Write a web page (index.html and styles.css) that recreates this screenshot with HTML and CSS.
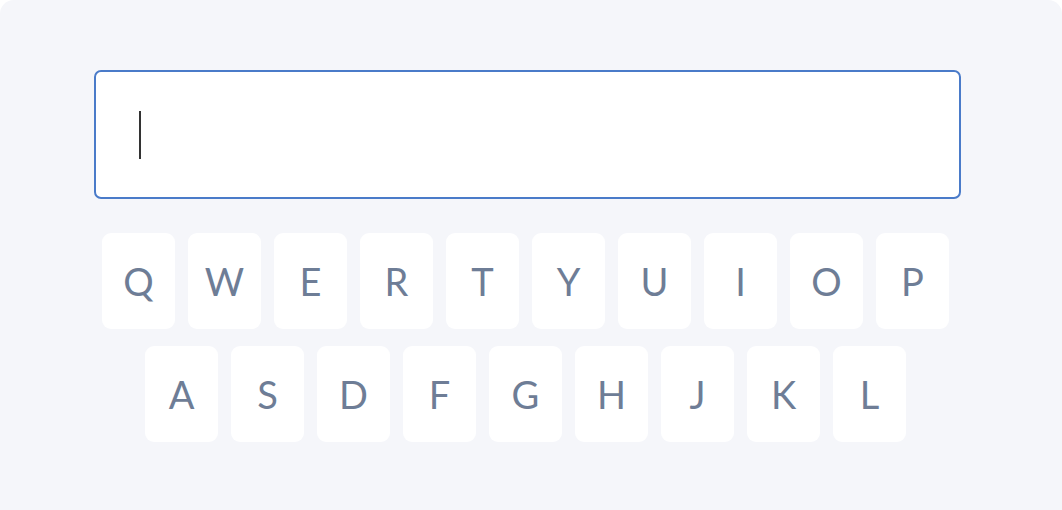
FILE: index.html
```html
<!DOCTYPE html>
<html lang="en">
<head>
  <meta charset="UTF-8" />
  <title>Keyboard</title>
  <link rel="stylesheet" href="styles.css">
</head>
<body>

  <div class="container">
    <div class="field">
      <span class="caret"></span>
    </div>

    <div class="keyboard">
      <div class="row">
        <div class="key">Q</div>
        <div class="key">W</div>
        <div class="key">E</div>
        <div class="key">R</div>
        <div class="key">T</div>
        <div class="key">Y</div>
        <div class="key">U</div>
        <div class="key">I</div>
        <div class="key">O</div>
        <div class="key">P</div>
      </div>
      <div class="row">
        <div class="key">A</div>
        <div class="key">S</div>
        <div class="key">D</div>
        <div class="key">F</div>
        <div class="key">G</div>
        <div class="key">H</div>
        <div class="key">J</div>
        <div class="key">K</div>
        <div class="key">L</div>
      </div>
    </div>
  </div>

</body>
</html>
```

FILE: styles.css
```css
* {
  box-sizing: border-box;
}

html, body {
  margin: 0;
  height: 100%;
}

body {
  font-family: 'Lato', 'Open Sans', sans-serif;
  background-color: #ffffff;
}

.container {
  height: 100%;
  background-color: #f5f6fa;
  border-radius: 14px 14px 0 0;
  padding: 70px 0 0 94px;
}

.field {
  width: 867px;
  height: 129px;
  background-color: #ffffff;
  border: 2px solid #4a7bc9;
  border-radius: 7px;
  padding: 39px 0 0 43px;
}

.caret {
  display: block;
  width: 2px;
  height: 48px;
  background-color: #333333;
}

.keyboard {
  width: 863px;
  margin-top: 34px;
  display: flex;
  flex-direction: column;
  gap: 17px;
}

.row {
  display: flex;
  justify-content: center;
  gap: 13px;
}

.key {
  width: 73px;
  height: 96px;
  background-color: #ffffff;
  border-radius: 9px;
  display: flex;
  align-items: center;
  justify-content: center;
  font-size: 38px;
  font-weight: 400;
  color: #6e7d96;
}
```
